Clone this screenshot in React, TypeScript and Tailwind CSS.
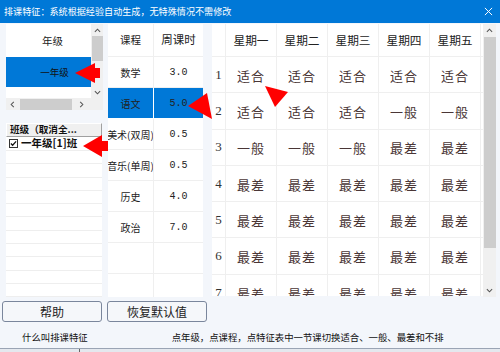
import React from "react";

const cjk = { fontFamily: '"Noto Sans CJK SC", "Noto Sans", sans-serif' };

const days = ["星期一", "星期二", "星期三", "星期四", "星期五"];

const rows = [
  ["适合", "适合", "适合", "适合", "适合"],
  ["适合", "适合", "适合", "一般", "一般"],
  ["一般", "一般", "一般", "最差", "最差"],
  ["最差", "最差", "最差", "最差", "最差"],
  ["最差", "最差", "最差", "最差", "最差"],
  ["最差", "最差", "最差", "最差", "最差"],
  ["最差", "最差", "最差", "最差", "最差"],
];

const courses = [
  { name: "数学", hours: "3.0" },
  { name: "语文", hours: "5.0", active: true },
  { name: "美术(双周)", hours: "0.5" },
  { name: "音乐(单周)", hours: "0.5" },
  { name: "历史", hours: "4.0" },
  { name: "政治", hours: "7.0" },
  { name: "", hours: "" },
  { name: "", hours: "" },
];

const Up = () => (
  <svg viewBox="0 0 8 5" className="w-[7px] h-[5px]" fill="none" stroke="#555" strokeWidth="1.2">
    <path d="M1 4 L4 1 L7 4" />
  </svg>
);
const Down = () => (
  <svg viewBox="0 0 8 5" className="w-[7px] h-[5px]" fill="none" stroke="#555" strokeWidth="1.2">
    <path d="M1 1 L4 4 L7 1" />
  </svg>
);

const Arrows = () => (
  <svg className="absolute left-0 top-0 w-[500px] h-[352px] pointer-events-none" viewBox="0 0 500 352">
    <g fill="#ff0000">
      <polygon points="75,73 95,63 95,68 100,68 100,78 95,78 95,83" />
      <polygon points="188,106 207,93 212,119" />
      <polygon points="83,146 102,135 102,141 108,141 108,151 102,151 102,157" />
      <polygon points="265,86 288,92 275,107" />
    </g>
  </svg>
);

export default function App() {
  return (
    <div className="relative w-[500px] h-[352px] overflow-hidden bg-[#f3f6fb]" style={cjk}>
      {/* title bar */}
      <div className="h-[23px] bg-[#0078d7] flex items-center justify-between pl-[4px] pr-[7px] text-white">
        <span className="text-[9.1px] leading-none">排课特征：系统根据经验自动生成，无特殊情况不需修改</span>
        <svg viewBox="0 0 10 10" className="w-[9px] h-[9px]" stroke="white" strokeWidth="1.1">
          <path d="M1 1 L9 9 M9 1 L1 9" />
        </svg>
      </div>

      <div className="flex h-[273px] mt-[1px]">
        {/* left column */}
        <div className="ml-[6px] w-[98px] flex flex-col">
          <div className="flex h-[74px]">
            <div className="w-[85px] bg-white flex flex-col">
              <div className="h-[33px] flex items-center justify-center pl-[8px] text-[10.5px] text-[#222]">年级</div>
              <div className="h-[30px] bg-[#0078d7] flex items-center justify-center pl-[12px] text-[9.5px] text-[#111]">一年级</div>
            </div>
            <div className="w-[12px] bg-[#f0f0f0] flex flex-col items-center">
              <div className="h-[12px] flex items-center justify-center"><Up /></div>
              <div className="w-[11px] h-[25px] bg-[#cdcdcd]" />
              <div className="flex-1" />
              <div className="h-[12px] flex items-center justify-center"><Down /></div>
            </div>
          </div>
          <div className="flex h-[12px]">
            <div className="w-[85px] bg-[#f0f0f0] flex items-center">
              <div className="w-[12px] flex justify-center">
                <svg viewBox="0 0 5 8" className="w-[5px] h-[7px]" fill="none" stroke="#555" strokeWidth="1.2"><path d="M4 1 L1 4 L4 7" /></svg>
              </div>
              <div className="w-[52px] h-[11px] bg-[#cdcdcd] ml-[2px]" />
              <div className="flex-1 flex justify-center">
                <svg viewBox="0 0 5 8" className="w-[5px] h-[7px]" fill="none" stroke="#555" strokeWidth="1.2"><path d="M1 1 L4 4 L1 7" /></svg>
              </div>
            </div>
            <div className="w-[12px] bg-[#f0f0f0]" />
          </div>

          <div className="mt-[13px] w-[96px] flex-1 flex flex-col bg-white overflow-hidden">
            <div className="h-[14px] shrink-0 bg-[#f0f0f0] border-r border-b border-[#a0a0a0] border-l border-t border-l-white border-t-white flex items-center pl-[3px] text-[9.6px] leading-none font-bold text-[#111] whitespace-nowrap overflow-hidden">
              班级（取消全...
            </div>
            <div className="h-[14px] shrink-0 flex items-center pl-[3px] gap-[3px] border-b border-[#eeeeee]">
              <div className="w-[9px] h-[9px] border border-[#333] bg-white flex items-center justify-center">
                <svg viewBox="0 0 8 8" className="w-[7px] h-[7px]" fill="none" stroke="#111" strokeWidth="1.4"><path d="M1 4 L3 6 L7 1.5" /></svg>
              </div>
              <span className="text-[10.5px] leading-none font-bold text-[#111] whitespace-nowrap">一年级[1]班</span>
            </div>
            {Array.from({ length: 11 }).map((_, i) => (
              <div key={i} className="h-[13.3px] shrink-0 border-b border-[#eeeeee]" />
            ))}
          </div>
        </div>

        {/* course table */}
        <div className="ml-[4px] w-[95px] bg-white flex flex-col overflow-hidden">
          <div className="h-[33px] shrink-0 flex border-b border-[#efefef]">
            <div className="w-[46px] flex items-center justify-center text-[10.5px] text-[#222] border-r border-[#efefef]">课程</div>
            <div className="flex-1 flex items-center justify-center text-[11.5px] text-[#222]">周课时</div>
          </div>
          {courses.map((c, i) => (
            <div key={i} className={`h-[31px] shrink-0 flex border-b ${c.active ? "bg-[#0078d7] border-white" : "border-[#efefef]"}`}>
              <div className={`w-[46px] flex items-center justify-center overflow-hidden whitespace-nowrap text-[10px] text-[#222] border-r ${c.active ? "border-white" : "border-[#efefef]"}`}>
                {c.name}
              </div>
              <div className="flex-1 flex items-center justify-center text-[10px] text-[#222]" style={{ fontFamily: '"Liberation Mono", monospace' }}>
                {c.hours}
              </div>
            </div>
          ))}
        </div>

        {/* schedule grid */}
        <div className="ml-[9px] w-[271px] h-[272px] bg-white flex flex-col overflow-hidden">
          <div className="h-[33px] shrink-0 flex border-b border-[#efefef]">
            <div className="w-[14px] border-r border-[#efefef]" />
            {days.map((d) => (
              <div key={d} className="w-[51px] shrink-0 flex items-center justify-center text-[11.7px] text-[#222] border-r border-[#efefef]">
                {d}
              </div>
            ))}
          </div>
          {rows.map((r, i) => (
            <div key={i} className="h-[36.3px] shrink-0 flex border-b border-[#efefef]">
              <div className="w-[14px] flex items-center justify-center text-[13px] text-[#333] border-r border-[#efefef]" style={{ fontFamily: '"Liberation Serif", serif' }}>
                {i + 1}
              </div>
              {r.map((v, j) => (
                <div key={j} className="w-[51px] shrink-0 flex items-center justify-center pt-[2px] text-[13px] tracking-[1px] text-[#4a3636] border-r border-[#efefef]">
                  {v}
                </div>
              ))}
            </div>
          ))}
        </div>
        <div className="w-[13px] bg-[#f0f0f0] flex flex-col items-center">
          <div className="h-[13px] flex items-center justify-center"><Up /></div>
          <div className="w-[12px] h-[211px] bg-[#cdcdcd]" />
          <div className="flex-1" />
          <div className="h-[13px] flex items-center justify-center"><Down /></div>
        </div>
      </div>

      {/* buttons */}
      <div className="flex gap-[5px] pl-[2px] mt-[4px]">
        <button className="w-[100px] h-[21px] rounded-[3px] border border-[#7a869c] bg-[#f5f7fa] text-[12px] text-[#222] flex items-center justify-center">
          帮助
        </button>
        <button className="w-[100px] h-[21px] rounded-[3px] border border-[#7a869c] bg-[#f5f7fa] text-[12px] text-[#222] flex items-center justify-center">
          恢复默认值
        </button>
      </div>

      <div className="flex items-center h-[12px] mt-[9px] text-[9.4px] text-[#111] whitespace-nowrap">
        <span className="ml-[22px]">什么叫排课特征</span>
        <span className="ml-[84px]">点年级，点课程，点特征表中一节课切换适合、一般、最差和不排</span>
      </div>

      <div className="mt-[5px] border-t border-[#9aa4b4] h-[6px] bg-[#e4e8ee] flex">
        <div className="ml-[79px] w-[1px] h-full bg-[#666]" />
      </div>

      <Arrows />
    </div>
  );
}
